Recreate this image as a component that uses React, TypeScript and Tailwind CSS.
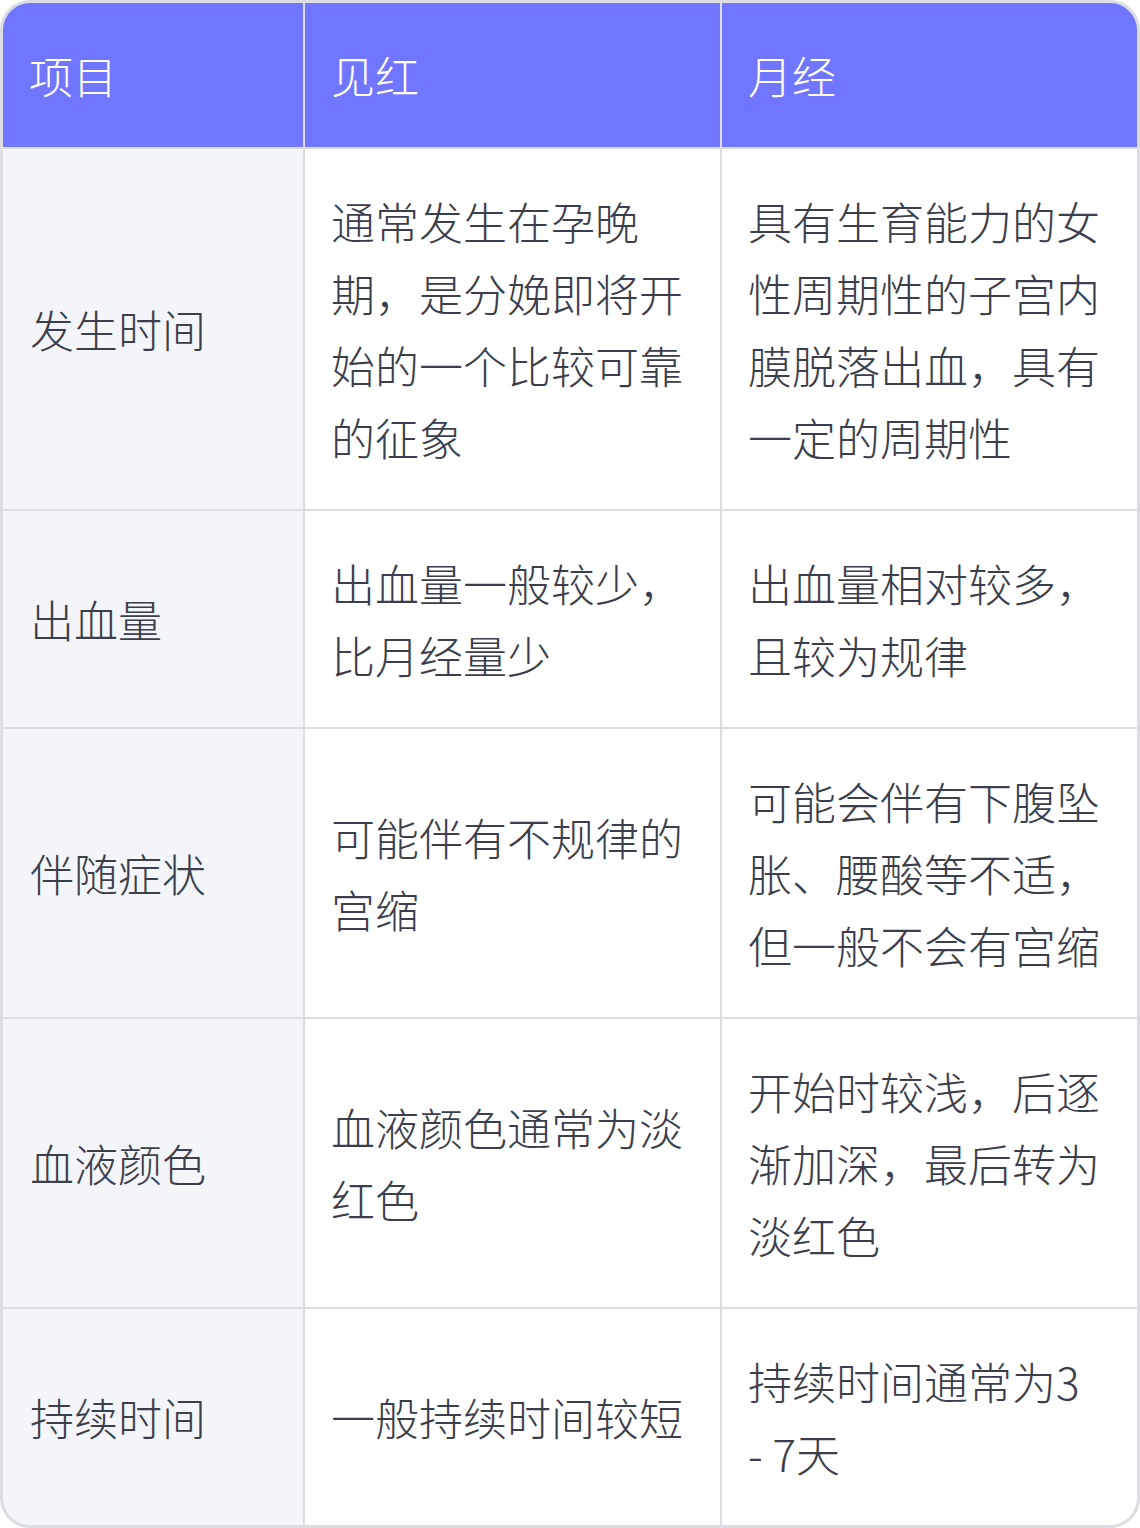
import type { ReactNode } from 'react'

const rows: [string, string, ReactNode][] = [
  ['发生时间', '通常发生在孕晚期，是分娩即将开始的一个比较可靠的征象', '具有生育能力的女性周期性的子宫内膜脱落出血，具有一定的周期性'],
  ['出血量', '出血量一般较少，比月经量少', '出血量相对较多，且较为规律'],
  ['伴随症状', '可能伴有不规律的宫缩', '可能会伴有下腹坠胀、腰酸等不适，但一般不会有宫缩'],
  ['血液颜色', '血液颜色通常为淡红色', '开始时较浅，后逐渐加深，最后转为淡红色'],
  [
    '持续时间',
    '一般持续时间较短',
    <>
      持续时间通常为3 <span className="whitespace-nowrap">- 7天</span>
    </>,
  ],
]

function Cell({ children, className = '' }: { children: ReactNode; className?: string }) {
  return (
    <div className={`flex items-center px-[26px] py-9 ${className}`}>
      <p>{children}</p>
    </div>
  )
}

export default function App() {
  return (
    <div className="w-[1140px] h-[1528px] bg-white font-['Noto_Sans_CJK_SC',sans-serif] font-light text-[44px] leading-[72px] text-[#3b3e4b]">
      <div className="overflow-hidden rounded-[30px] border-[3px] border-[#dcdde3] bg-[#dcdde3]">
        <div className="grid grid-cols-[300px_415px_415px] gap-[2px]">
          {['项目', '见红', '月经'].map((h) => (
            <Cell key={h} className="bg-[#7076ff] text-white">
              {h}
            </Cell>
          ))}
          {rows.map(([a, b, c]) => (
            <div key={a} className="contents">
              <Cell className="bg-[#f4f5f9] pl-[27px]">{a}</Cell>
              <Cell className="bg-white">{b}</Cell>
              <Cell className="bg-white">{c}</Cell>
            </div>
          ))}
        </div>
      </div>
    </div>
  )
}
